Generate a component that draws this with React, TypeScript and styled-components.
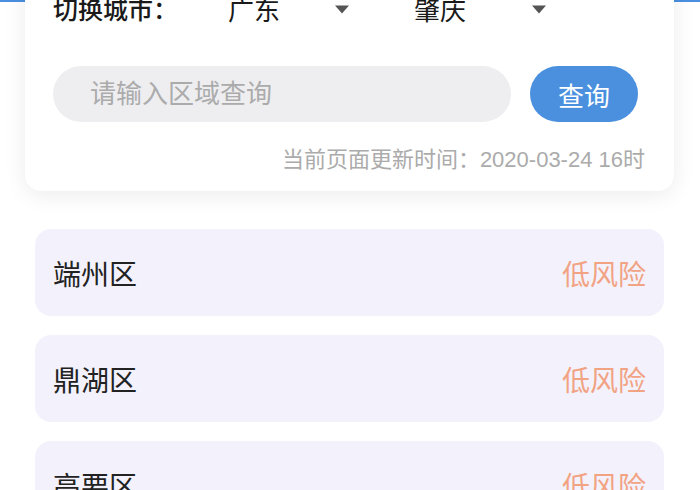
import React from 'react';
import styled, { createGlobalStyle } from 'styled-components';

const GlobalStyle = createGlobalStyle`
  html, body {
    margin: 0;
    padding: 0;
    background: #ffffff;
    font-family: "Liberation Sans", "Noto Sans CJK SC", sans-serif;
    overflow: hidden;
  }
`;

type Area = {
  name: string;
  risk: string;
};

const areas: Area[] = [
  { name: '端州区', risk: '低风险' },
  { name: '鼎湖区', risk: '低风险' },
  { name: '高要区', risk: '低风险' },
];

function Caret() {
  return (
    <svg width="16" height="9" viewBox="0 0 16 9">
      <path d="M1 0.5 H15 L8 8.5 Z" fill="#555" />
    </svg>
  );
}

export default function App() {
  return (
    <Page>
      <GlobalStyle />
      <Header />
      <Card>
        <CityRow>
          <Label>切换城市：</Label>
          <Picker $width={122} $gap={64}>
            <span>广东</span>
            <Caret />
          </Picker>
          <Picker $width={133} $gap={0}>
            <span>肇庆</span>
            <Caret />
          </Picker>
        </CityRow>
        <SearchRow>
          <SearchInput type="text" placeholder="请输入区域查询" />
          <SearchButton>查询</SearchButton>
        </SearchRow>
        <UpdateTime>当前页面更新时间：2020-03-24 16时</UpdateTime>
      </Card>
      <List>
        {areas.map((area) => (
          <Item key={area.name}>
            <AreaName>{area.name}</AreaName>
            <Risk>{area.risk}</Risk>
          </Item>
        ))}
      </List>
    </Page>
  );
}

const Page = styled.div`
  width: 700px;
  height: 490px;
  overflow: hidden;
  background: #ffffff;
`;

const Header = styled.div`
  height: 2px;
  background: #4a8fe0;
`;

const Card = styled.div`
  position: relative;
  margin: -42px 26px 0 25px;
  padding: 20px 29px 18px 28px;
  background: #ffffff;
  border-radius: 16px;
  box-shadow: 0 4px 22px rgba(0, 0, 0, 0.08);
`;

const CityRow = styled.div`
  display: flex;
  align-items: center;
  height: 56px;
`;

const Label = styled.div`
  width: 175px;
  font-size: 25px;
  font-weight: 500;
  color: #1a1a1a;
`;

const Picker = styled.div<{ $width: number; $gap: number }>`
  display: flex;
  align-items: center;
  justify-content: space-between;
  width: ${(p) => p.$width}px;
  margin-right: ${(p) => p.$gap}px;
  font-size: 26px;
  color: #1a1a1a;

  svg {
    margin-top: 2px;
  }
`;

const SearchRow = styled.div`
  display: flex;
  align-items: center;
  gap: 19px;
  margin-top: 30px;
  padding-right: 7px;
`;

const SearchInput = styled.input`
  flex: 1;
  height: 56px;
  box-sizing: border-box;
  padding: 0 0 0 37px;
  border: none;
  outline: none;
  border-radius: 28px;
  background: #eeeef1;
  font-family: "Liberation Sans", "Noto Sans CJK SC", sans-serif;
  font-size: 26px;
  color: #333;

  &::placeholder {
    color: #ababab;
  }
`;

const SearchButton = styled.button`
  width: 108px;
  height: 56px;
  border: none;
  border-radius: 28px;
  background: #4a90de;
  color: #ffffff;
  font-family: "Liberation Sans", "Noto Sans CJK SC", sans-serif;
  font-size: 26px;
  padding: 0;
`;

const UpdateTime = styled.div`
  margin-top: 19px;
  text-align: right;
  font-size: 22px;
  color: #ababab;
`;

const List = styled.div`
  display: flex;
  flex-direction: column;
  gap: 19px;
  margin: 38px 36px 0 35px;
`;

const Item = styled.div`
  display: flex;
  align-items: center;
  justify-content: space-between;
  height: 87px;
  padding: 0 18px;
  border-radius: 16px;
  background: #f3f2fc;
`;

const AreaName = styled.div`
  font-size: 28px;
  color: #222;
`;

const Risk = styled.div`
  font-size: 28px;
  color: #f2a384;
`;
